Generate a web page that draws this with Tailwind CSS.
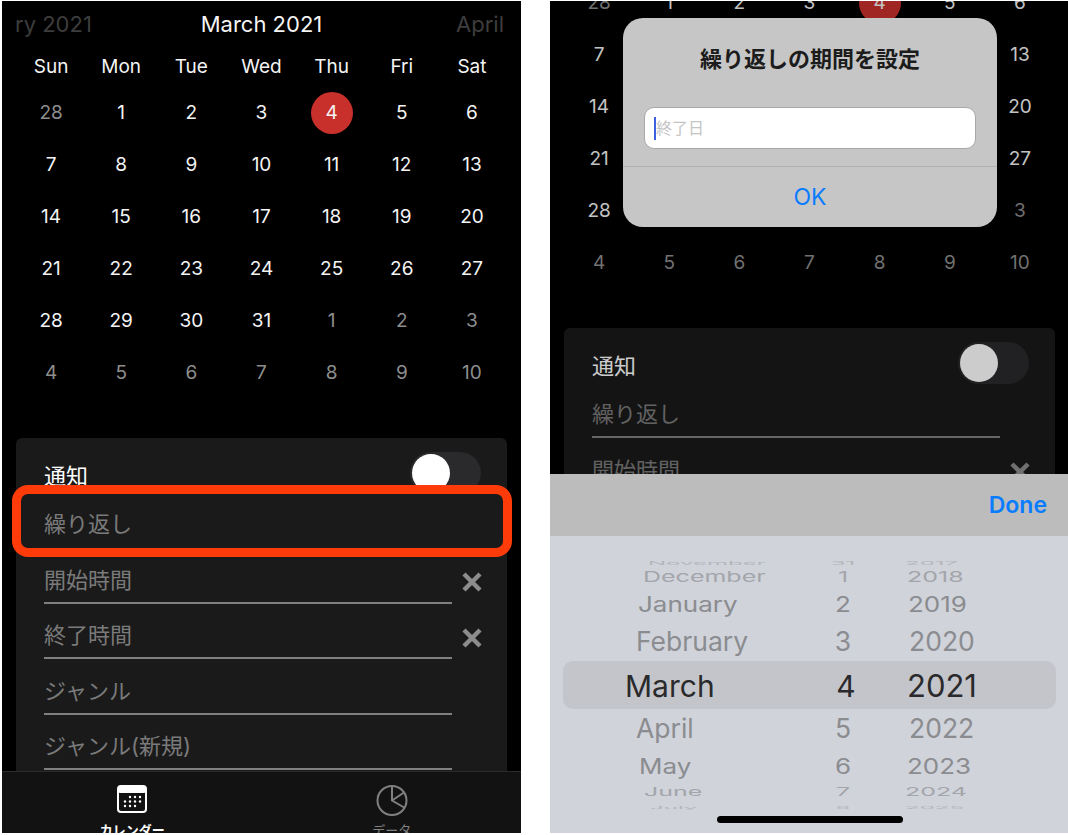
<!DOCTYPE html>
<html lang="ja">
<head>
<meta charset="utf-8">
<script src="https://cdn.jsdelivr.net/npm/@tailwindcss/browser@4"></script>
</head>
<body class="bg-white font-['Inter','Noto_Sans_CJK_JP',sans-serif]">
<div class="flex h-[835px] w-[1068px] overflow-hidden pt-px">

<!-- LEFT PHONE -->
<section class="relative ml-[2px] h-[832px] w-[519px] shrink-0 overflow-hidden bg-black text-[#f4f4f4]">
  <header class="relative flex h-[47px] items-center justify-center text-[22px]">
    <span class="absolute left-[13px] text-[#3d3d3d]">ry 2021</span>
    <span>March 2021</span>
    <span class="absolute right-[17px] text-[#3d3d3d]">April</span>
  </header>
  <div class="mx-[14px] grid grid-cols-7 text-center text-[19px] [&>*]:flex [&>*]:h-[52px] [&>*]:items-center [&>*]:justify-center">
    <div class="!h-[39px]">Sun</div><div class="!h-[39px]">Mon</div><div class="!h-[39px]">Tue</div><div class="!h-[39px]">Wed</div><div class="!h-[39px]">Thu</div><div class="!h-[39px]">Fri</div><div class="!h-[39px]">Sat</div>
    <div class="text-[#8e8e8e]">28</div><div>1</div><div>2</div><div>3</div><div><span class="flex h-[42px] w-[42px] items-center justify-center rounded-full bg-[#c7302b]">4</span></div><div>5</div><div>6</div>
    <div>7</div><div>8</div><div>9</div><div>10</div><div>11</div><div>12</div><div>13</div>
    <div>14</div><div>15</div><div>16</div><div>17</div><div>18</div><div>19</div><div>20</div>
    <div>21</div><div>22</div><div>23</div><div>24</div><div>25</div><div>26</div><div>27</div>
    <div>28</div><div>29</div><div>30</div><div>31</div><div class="text-[#8e8e8e]">1</div><div class="text-[#8e8e8e]">2</div><div class="text-[#8e8e8e]">3</div>
    <div class="text-[#8e8e8e]">4</div><div class="text-[#8e8e8e]">5</div><div class="text-[#8e8e8e]">6</div><div class="text-[#8e8e8e]">7</div><div class="text-[#8e8e8e]">8</div><div class="text-[#8e8e8e]">9</div><div class="text-[#8e8e8e]">10</div>
  </div>
  <div class="mx-[14px] mt-[39px] rounded-md bg-[#1a1a1a] pb-[20px] pl-[28px] pr-[26px] pt-[14px] text-[22px] text-[#7a7a7a]">
    <div class="flex h-[42px] items-center justify-between">
      <span class="relative top-[3px] text-white">通知</span>
      <span class="flex h-[42px] w-[71px] items-center rounded-full bg-[#2a2a2c] pl-[2px]"><span class="h-[38px] w-[38px] rounded-full bg-white"></span></span>
    </div>
    <div class="mr-[29px] flex h-[54px] items-center border-b-[2px] border-transparent pt-[9px]">繰り返し</div>
    <div class="flex h-[56px] items-center"><span class="flex h-[56px] flex-1 items-center border-b-[2px] border-[#808080] pt-[10px]">開始時間</span><svg class="ml-[9px] mr-[-2px] mt-[12px]" width="22" height="22" viewBox="0 0 22 22"><path d="M3 3L19 19M19 3L3 19" stroke="#8c8c8c" stroke-width="4.5"/></svg></div>
    <div class="flex h-[55px] items-center"><span class="flex h-[55px] flex-1 items-center border-b-[2px] border-[#808080] pt-[10px]">終了時間</span><svg class="ml-[9px] mr-[-2px] mt-[12px]" width="22" height="22" viewBox="0 0 22 22"><path d="M3 3L19 19M19 3L3 19" stroke="#8c8c8c" stroke-width="4.5"/></svg></div>
    <div class="mr-[29px] flex h-[56px] items-center border-b-[2px] border-[#808080] pt-[10px]">ジャンル</div>
    <div class="mr-[29px] flex h-[55px] items-center border-b-[2px] border-[#808080] pt-[10px]">ジャンル(新規)</div>
  </div>

  <!-- highlight -->
  <div class="absolute left-[10px] top-[484px] h-[72px] w-[500px] rounded-[16px] border-[9px] border-[#ff3b0a]"></div>

  <!-- tab bar -->
  <nav class="absolute bottom-0 left-0 flex h-[62px] w-full overflow-hidden border-t border-[#2c2c2c] bg-[#121212]">
    <div class="flex w-1/2 flex-col items-center pl-[1px] pt-[13px] text-[13px] font-bold leading-[18px] text-white">
      <svg class="shrink-0" width="30" height="28" viewBox="0 0 30 28"><rect x="1" y="1" width="28" height="26" rx="3" fill="#121212" stroke="#fff" stroke-width="2"/><rect x="1" y="1" width="28" height="7" rx="2" fill="#fff"/><g fill="#fff"><circle cx="13" cy="12" r="1.2"/><circle cx="18" cy="12" r="1.2"/><circle cx="23" cy="12" r="1.2"/><circle cx="8" cy="16.5" r="1.2"/><circle cx="13" cy="16.5" r="1.2"/><circle cx="18" cy="16.5" r="1.2"/><circle cx="23" cy="16.5" r="1.2"/><circle cx="8" cy="21" r="1.2"/><circle cx="13" cy="21" r="1.2"/><circle cx="18" cy="21" r="1.2"/></g></svg>
      <span class="mt-[8px] shrink-0">カレンダー</span>
    </div>
    <div class="flex w-1/2 flex-col items-center pl-[1px] pt-[13px] text-[13px] leading-[18px] text-[#808080]">
      <svg class="shrink-0" width="32" height="31" viewBox="0 0 32 31" fill="none" stroke="#808080" stroke-width="2"><circle cx="16" cy="15.5" r="14.5"/><path d="M16 1V15.5L29 23M16 15.5L28 7.5"/></svg>
      <span class="mt-[5px] shrink-0">データ</span>
    </div>
  </nav>
</section>

<!-- RIGHT PHONE -->
<section class="relative ml-[29px] h-[832px] w-[519px] shrink-0 overflow-hidden bg-black text-[#f4f4f4]">
  <div class="mt-[-110px]">
    <header class="h-[47px]"></header>
    <div class="mx-[14px] grid grid-cols-7 text-center text-[19px] [&>*]:flex [&>*]:h-[52px] [&>*]:items-center [&>*]:justify-center">
      <div class="!h-[39px]"></div><div class="!h-[39px]"></div><div class="!h-[39px]"></div><div class="!h-[39px]"></div><div class="!h-[39px]"></div><div class="!h-[39px]"></div><div class="!h-[39px]"></div>
      <div class="text-[#8e8e8e]">28</div><div>1</div><div>2</div><div>3</div><div><span class="flex h-[42px] w-[42px] items-center justify-center rounded-full bg-[#c7302b]">4</span></div><div>5</div><div>6</div>
      <div>7</div><div>8</div><div>9</div><div>10</div><div>11</div><div>12</div><div>13</div>
      <div>14</div><div>15</div><div>16</div><div>17</div><div>18</div><div>19</div><div>20</div>
      <div>21</div><div>22</div><div>23</div><div>24</div><div>25</div><div>26</div><div>27</div>
      <div>28</div><div>29</div><div>30</div><div>31</div><div class="text-[#8e8e8e]">1</div><div class="text-[#8e8e8e]">2</div><div class="text-[#8e8e8e]">3</div>
      <div class="text-[#8e8e8e]">4</div><div class="text-[#8e8e8e]">5</div><div class="text-[#8e8e8e]">6</div><div class="text-[#8e8e8e]">7</div><div class="text-[#8e8e8e]">8</div><div class="text-[#8e8e8e]">9</div><div class="text-[#8e8e8e]">10</div>
    </div>
    <div class="mx-[14px] mt-[39px] rounded-md bg-[#1a1a1a] pl-[28px] pr-[26px] pt-[14px] text-[22px] text-[#7a7a7a]">
      <div class="flex h-[42px] items-center justify-between">
        <span class="relative top-[3px] text-white">通知</span>
        <span class="flex h-[42px] w-[71px] items-center rounded-full bg-[#2a2a2c] pl-[2px]"><span class="h-[38px] w-[38px] rounded-full bg-white"></span></span>
      </div>
      <div class="mr-[29px] flex h-[54px] items-center border-b-[2px] border-[#808080] pt-[9px]">繰り返し</div>
      <div class="flex h-[56px] items-center"><span class="flex h-[56px] flex-1 items-center border-b-[2px] border-[#808080] pt-[10px]">開始時間</span><svg class="ml-[9px] mr-[-2px] mt-[12px]" width="22" height="22" viewBox="0 0 22 22"><path d="M3 3L19 19M19 3L3 19" stroke="#8c8c8c" stroke-width="4.5"/></svg></div>
    </div>
  </div>
  <div class="absolute inset-0 bg-black/20"></div>

  <!-- dialog -->
  <div class="absolute left-[73px] top-[17px] flex h-[209px] w-[374px] flex-col rounded-[20px] bg-[#c6c6c6]">
    <h2 class="pt-[25px] text-center text-[22px] font-bold leading-[32px] text-[#1c1c1c]">繰り返しの期間を設定</h2>
    <div class="mx-[21px] mt-[32px] flex h-[42px] items-center rounded-[10px] border border-[#a8a8a8] bg-white pl-[9px]">
      <span class="h-[23px] w-[2px] bg-[#3a5fe0]"></span>
      <span class="text-[16px] text-[#c4c4c4]">終了日</span>
    </div>
    <div class="mt-[17px] flex flex-1 items-center justify-center border-t border-[#b0b0b0] text-[23px] text-[#0a7cff]">OK</div>
  </div>

  <!-- date picker sheet -->
  <div class="absolute bottom-0 left-0 w-[518px]">
    <div class="flex h-[62px] items-center justify-end bg-[#bcbcbc] pr-[21px] text-[23px] font-semibold text-[#0a7cff]">Done</div>
    <div class="relative h-[297px] bg-[#d0d3da] pt-[20px] text-[#8b8c90]">
      <div class="absolute left-[13px] top-[125px] h-[48px] w-[493px] rounded-[10px] bg-[#c4c5ca]"></div>
      <div class="relative">
        <div class="flex h-[14px] items-center text-[24px] text-[#b4b6bb] [transform:scaleY(.2)]"><span class="w-[270px] pl-[98px]">November</span><span class="w-[46px] text-center">31</span><span class="pl-[39px]">2017</span></div>
        <div class="flex h-[14px] items-center text-[25px] text-[#a3a5aa] [transform:scaleY(.6)]"><span class="w-[270px] pl-[93px]">December</span><span class="w-[46px] text-center">1</span><span class="pl-[41px]">2018</span></div>
        <div class="flex h-[40px] items-center text-[26px] [transform:scaleY(.8)]"><span class="w-[270px] pl-[88px]">January</span><span class="w-[46px] text-center">2</span><span class="pl-[42px]">2019</span></div>
        <div class="flex h-[36px] items-center text-[26.5px]"><span class="w-[270px] pl-[86px]">February</span><span class="w-[46px] text-center">3</span><span class="pl-[43px]">2020</span></div>
        <div class="flex h-[52px] items-center text-[30px] text-[#2a2a2c]"><span class="w-[270px] pl-[75px]">March</span><span class="w-[46px] pl-[6px] text-center">4</span><span class="pl-[41px] text-[31px]">2021</span></div>
        <div class="flex h-[34px] items-center text-[26.5px]"><span class="w-[270px] pl-[86px]">April</span><span class="w-[46px] text-center">5</span><span class="pl-[43px]">2022</span></div>
        <div class="flex h-[40px] items-center text-[26px] [transform:scaleY(.8)]"><span class="w-[270px] pl-[89px]">May</span><span class="w-[46px] text-center">6</span><span class="pl-[41px]">2023</span></div>
        <div class="flex h-[12px] items-center text-[25px] text-[#a3a5aa] [transform:scaleY(.47)]"><span class="w-[270px] pl-[94px]">June</span><span class="w-[46px] text-center">7</span><span class="pl-[39px]">2024</span></div>
        <div class="flex h-[20px] items-center text-[24px] text-[#b4b6bb] [transform:scaleY(.15)]"><span class="w-[270px] pl-[100px]">July</span><span class="w-[46px] text-center">8</span><span class="pl-[39px]">2025</span></div>
      </div>
      <div class="absolute bottom-[10px] left-[167px] h-[7px] w-[186px] rounded-full bg-black"></div>
    </div>
  </div>
</section>
</div>
</body>
</html>
